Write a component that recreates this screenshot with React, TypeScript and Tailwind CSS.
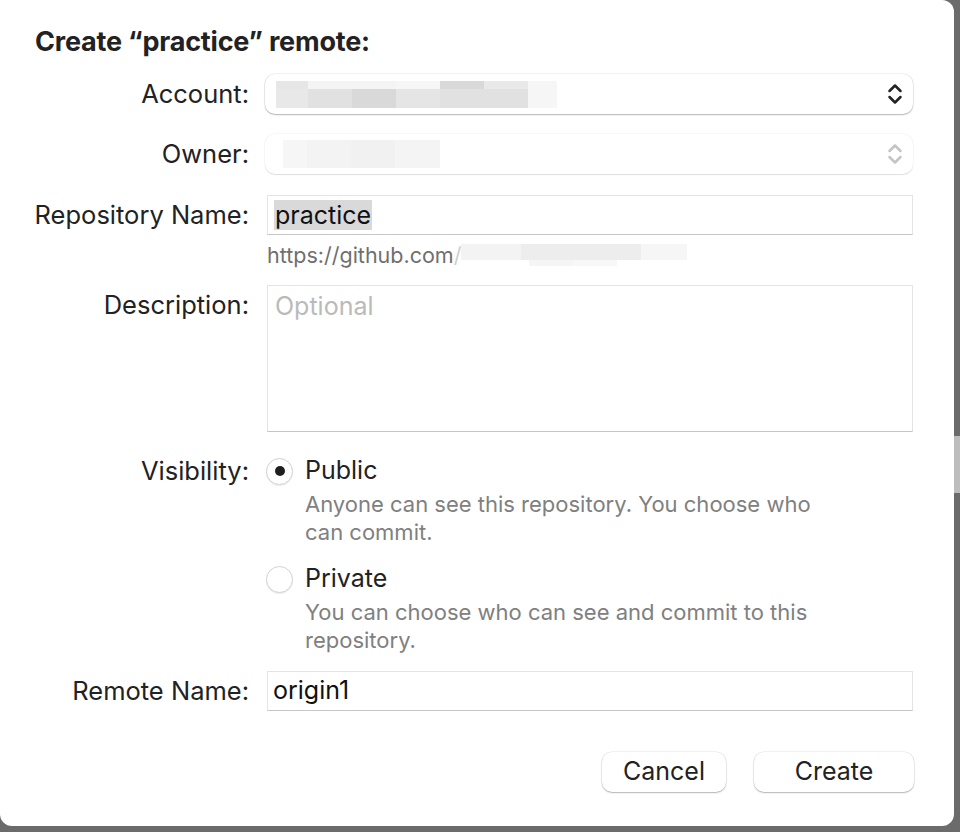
import React from "react";

const font = { fontFamily: "Inter, 'Liberation Sans', sans-serif" };

function Chevrons({ color }: { color: string }) {
  return (
    <svg width="16" height="24" viewBox="0 0 16 24" fill="none">
      <path d="M2.5 9L8 3.5L13.5 9" stroke={color} strokeWidth="2.5" strokeLinecap="round" strokeLinejoin="round" />
      <path d="M2.5 15L8 20.5L13.5 15" stroke={color} strokeWidth="2.5" strokeLinecap="round" strokeLinejoin="round" />
    </svg>
  );
}

function Blur({ blocks }: { blocks: { w: number; top: string; bottom: string }[] }) {
  return (
    <div className="flex">
      {blocks.map((b, i) => (
        <div key={i} className="flex flex-col" style={{ width: b.w }}>
          <div className="h-[8px]" style={{ background: b.top }} />
          <div className="h-[19px]" style={{ background: b.bottom }} />
        </div>
      ))}
    </div>
  );
}

function Label({ children }: { children: React.ReactNode }) {
  return <div className="w-[249px] shrink-0 text-right text-[25.5px] text-[#222] leading-[30px]">{children}</div>;
}

function Radio({ checked }: { checked?: boolean }) {
  return (
    <div className="w-[27px] h-[27px] rounded-full bg-white border border-[#d2d2d2] shadow-[0_1px_1px_rgba(0,0,0,0.08)] flex items-center justify-center shrink-0">
      {checked && <div className="w-[10px] h-[10px] rounded-full bg-[#1e1e1e]" />}
    </div>
  );
}

const buttonCls =
  "h-[40px] rounded-[10px] bg-white text-[25px] text-[#222] shadow-[0_0_0_0.5px_rgba(0,0,0,0.1),0_1px_1.5px_rgba(0,0,0,0.25)]";

export default function App() {
  return (
    <div className="w-[960px] h-[832px] bg-[#6b6b6b] flex overflow-hidden" style={font}>
      <div className="w-[954px] h-[826px] bg-white rounded-tr-[12px] rounded-br-[12px] rounded-bl-[12px] shrink-0 flex flex-col pr-[41px]">
        <div className="pl-[35px] pt-[28px] h-[56px] text-[27px] font-bold text-[#222] leading-[28px] tracking-[-0.2px]">
          Create “practice” remote:
        </div>

        {/* Account */}
        <div className="flex items-center mt-[18px] h-[40px]">
          <Label>Account:</Label>
          <div className="ml-[16px] flex-1 h-[40px] rounded-[10px] bg-white shadow-[0_0_0_0.5px_rgba(0,0,0,0.1),0_1px_1.5px_rgba(0,0,0,0.25)] flex items-center pl-[11px] pr-[10px]">
            <Blur
              blocks={[
                { w: 32, top: "#e6e6e6", bottom: "#e8e8e8" },
                { w: 44, top: "#f4f4f4", bottom: "#e1e1e1" },
                { w: 44, top: "#f4f4f4", bottom: "#d9d9d9" },
                { w: 44, top: "#f6f6f6", bottom: "#e5e5e5" },
                { w: 44, top: "#d9d9d9", bottom: "#e1e1e1" },
                { w: 44, top: "#e9e9e9", bottom: "#e1e1e1" },
                { w: 29, top: "#f6f6f6", bottom: "#f6f6f6" },
              ]}
            />
            <div className="flex-1" />
            <Chevrons color="#222" />
          </div>
        </div>

        {/* Owner */}
        <div className="flex items-center mt-[20px] h-[40px]">
          <Label>Owner:</Label>
          <div className="ml-[16px] flex-1 h-[40px] rounded-[10px] bg-white shadow-[0_0_0_0.5px_rgba(0,0,0,0.06),0_1px_1px_rgba(0,0,0,0.1)] flex items-center pl-[18px] pr-[10px]">
            <div className="flex h-[28px]">
              <div className="w-[24px] bg-[#f6f6f6]" />
              <div className="w-[44px] bg-[#f3f3f3]" />
              <div className="w-[44px] bg-[#f1f1f1]" />
              <div className="w-[45px] bg-[#f4f4f4]" />
            </div>
            <div className="flex-1" />
            <Chevrons color="#c4c4c4" />
          </div>
        </div>

        {/* Repository name */}
        <div className="flex items-center mt-[21px] h-[40px]">
          <Label>Repository Name:</Label>
          <div className="ml-[18px] flex-1 h-[40px] border border-[#e4e4e4] border-b-[#c6c6c6] flex items-center pl-[6px]">
            <span className="bg-[#d9d9d9] text-[25px] text-[#111] px-[1px] leading-[30px]">practice</span>
          </div>
        </div>
        <div className="flex items-center mt-[8px] h-[24px]">
          <div className="w-[249px] shrink-0" />
          <div className="ml-[18px] flex items-center text-[21.5px] text-[#6f6f6f]">
            <span>https://github.com</span>
            <span className="text-[#cfcfcf]">/</span>
            <div className="flex flex-col">
              <div className="flex h-[16px]">
                <div className="w-[60px] bg-[#f3f3f3]" />
                <div className="w-[120px] bg-[#ededed]" />
                <div className="w-[46px] bg-[#f6f6f6]" />
              </div>
              <div className="flex h-[6px]">
                <div className="w-[68px]" />
                <div className="w-[44px] bg-[#f5f5f5]" />
                <div className="w-[44px] bg-[#f8f8f8]" />
              </div>
            </div>
          </div>
        </div>

        {/* Description */}
        <div className="flex mt-[18px]">
          <div className="w-[249px] shrink-0 text-right text-[25.5px] text-[#222] pt-[5px] leading-[30px]">Description:</div>
          <div className="ml-[18px] flex-1 h-[147px] border border-[#e4e4e4] border-b-[#c6c6c6] pl-[7px] pt-[5px] text-[25px] leading-[30px] text-[#bababa]">
            Optional
          </div>
        </div>

        {/* Visibility */}
        <div className="flex mt-[25px]">
          <div className="w-[249px] shrink-0 text-right text-[25.5px] text-[#222] leading-[28px]">Visibility:</div>
          <div className="ml-[17px] flex flex-col">
            <div className="flex items-center h-[28px]">
              <Radio checked />
              <span className="ml-[12px] text-[25px] text-[#222]">Public</span>
            </div>
            <div className="pl-[39px] mt-[5px] text-[22px] leading-[28px] text-[#808080] w-[560px]">
              Anyone can see this repository. You choose who can commit.
            </div>
            <div className="flex items-center h-[28px] mt-[19px]">
              <Radio />
              <span className="ml-[12px] text-[25px] text-[#222]">Private</span>
            </div>
            <div className="pl-[39px] mt-[5px] text-[22px] leading-[28px] text-[#808080] w-[560px]">
              You can choose who can see and commit to this repository.
            </div>
          </div>
        </div>

        {/* Remote name */}
        <div className="flex items-center mt-[17px] h-[40px]">
          <Label>Remote Name:</Label>
          <div className="ml-[18px] flex-1 h-[40px] border border-[#e4e4e4] border-b-[#c6c6c6] flex items-center pl-[5px] text-[25px] text-[#111]">
            origin1
          </div>
        </div>

        {/* Buttons */}
        <div className="flex justify-end mt-[41px] gap-[28px] -mr-[1px]">
          <button className={`${buttonCls} w-[124px]`}>Cancel</button>
          <button className={`${buttonCls} w-[160px]`}>Create</button>
        </div>
      </div>
      <div className="flex-1 flex flex-col">
        <div className="h-[436px]" />
        <div className="h-[57px] bg-[#bdbdbd]" />
      </div>
    </div>
  );
}
